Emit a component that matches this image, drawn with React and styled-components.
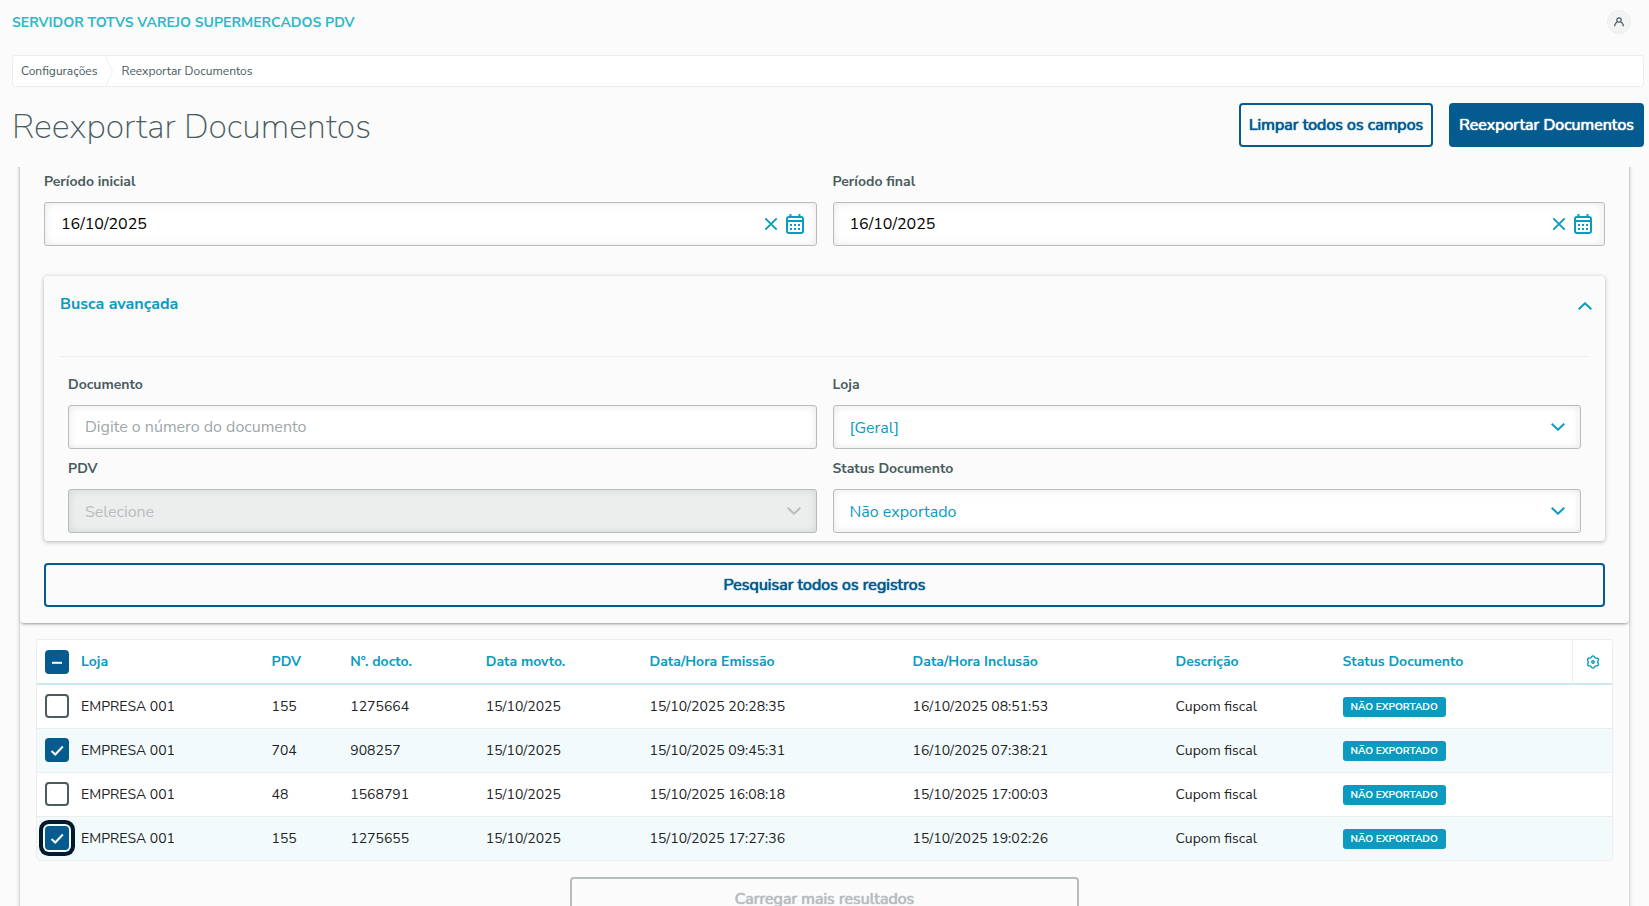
import React, { useEffect, useRef, useState } from 'react';
import styled, { createGlobalStyle } from 'styled-components';

const colors = {
    background: '#fbfbfb',
    brand: '#2cb9c9',
    primary: '#0c9abe',
    action: '#045b8f',
    text: '#1d2426',
    label: '#4a5c60',
    muted: '#9da7a9',
    disabled: '#b6bdbf',
    line: '#eceeee',
    selected: '#f2fafc',
    focus: '#041a2c',
};

const columns = [
    { key: 'loja', title: 'Loja', width: '12.1%' },
    { key: 'pdv', title: 'PDV', width: '5%' },
    { key: 'docto', title: 'Nº. docto.', width: '8.6%' },
    { key: 'movto', title: 'Data movto.', width: '10.4%' },
    { key: 'emissao', title: 'Data/Hora Emissão', width: '16.7%' },
    { key: 'inclusao', title: 'Data/Hora Inclusão', width: '16.7%' },
    { key: 'descricao', title: 'Descrição', width: '10.6%' },
];

const initialRows = [
    { loja: 'EMPRESA 001', pdv: '155', docto: '1275664', movto: '15/10/2025', emissao: '15/10/2025 20:28:35', inclusao: '16/10/2025 08:51:53', descricao: 'Cupom fiscal', checked: false },
    { loja: 'EMPRESA 001', pdv: '704', docto: '908257', movto: '15/10/2025', emissao: '15/10/2025 09:45:31', inclusao: '16/10/2025 07:38:21', descricao: 'Cupom fiscal', checked: true },
    { loja: 'EMPRESA 001', pdv: '48', docto: '1568791', movto: '15/10/2025', emissao: '15/10/2025 16:08:18', inclusao: '15/10/2025 17:00:03', descricao: 'Cupom fiscal', checked: false },
    { loja: 'EMPRESA 001', pdv: '155', docto: '1275655', movto: '15/10/2025', emissao: '15/10/2025 17:27:36', inclusao: '15/10/2025 19:02:26', descricao: 'Cupom fiscal', checked: true },
];

// outline of a gear with six rounded teeth, one pointing up
const gearPoints = Array.from({ length: 60 }, (_, i) => {
    const angle = (i / 60) * 2 * Math.PI;
    const radius = 5.4 + 0.7 * Math.cos(6 * angle);
    return `${(7 + radius * Math.sin(angle)).toFixed(2)},${(7 - radius * Math.cos(angle)).toFixed(2)}`;
}).join(' ');

const UserIcon = () => (
    <svg width="12" height="12" viewBox="0 0 12 12" fill="none" stroke={colors.label} strokeWidth="1.2">
        <circle cx="6" cy="4" r="2.2" />
        <path d="M1.6 10.2C1.8 8 3.2 6.4 4.6 5.8M10.4 10.2C10.2 8 8.8 6.4 7.4 5.8" />
    </svg>
);

const CloseIcon = () => (
    <svg width="14" height="14" viewBox="0 0 14 14" fill="none" stroke="currentColor" strokeWidth="1.9">
        <path d="M1.3 1.3L12.7 12.7M12.7 1.3L1.3 12.7" />
    </svg>
);

const CalendarIcon = () => (
    <svg width="18" height="20" viewBox="0 0 18 20" fill="none" stroke="currentColor">
        <rect x="1" y="3" width="16" height="16" rx="2" strokeWidth="2" />
        <path d="M1 7H17" strokeWidth="2" />
        <path d="M4.5 0V3M13.5 0V3" strokeWidth="2" />
        <path d="M4 11H14M4 15H14" strokeWidth="2" strokeDasharray="2 2" />
    </svg>
);

const Chevron = ({ up }) => (
    <svg width="14" height="8" viewBox="0 0 14 8" fill="none" stroke="currentColor" strokeWidth="2">
        <path d={up ? 'M0.7 7.3L7 1.3L13.3 7.3' : 'M0.7 0.7L7 6.7L13.3 0.7'} />
    </svg>
);

const GearIcon = () => (
    <svg width="14" height="14" viewBox="0 0 14 14" fill="none" stroke="currentColor" strokeWidth="1.4" strokeLinejoin="round">
        <polygon points={gearPoints} />
        <circle cx="7" cy="7" r="1.2" />
    </svg>
);

const Checkbox = ({ label, checked, indeterminate = false, onChange, autoFocus }) => {
    const ref = useRef(null);

    useEffect(() => {
        ref.current.indeterminate = indeterminate;
    }, [indeterminate]);

    return (
        <CheckWrapper>
            <CheckInput ref={ref} type="checkbox" aria-label={label} checked={checked} onChange={onChange} autoFocus={autoFocus} />
            <CheckMark viewBox="0 0 24 24" aria-hidden="true">
                {indeterminate && <path d="M7 12.8H17" />}
                {checked && !indeterminate && <path d="M6.5 13L10.3 16.5L17.8 8.5" />}
            </CheckMark>
        </CheckWrapper>
    );
};

const DateField = ({ id, label }) => {
    const [value, setValue] = useState('16/10/2025');

    return (
        <Field>
            <Label htmlFor={id}>{label}</Label>
            <Box>
                <Input id={id} type="text" value={value} onChange={(e) => setValue(e.target.value)} />
                <DateActions>
                    <IconButton type="button" aria-label="Limpar" onClick={() => setValue('')}><CloseIcon /></IconButton>
                    <IconButton type="button" aria-label="Calendário"><CalendarIcon /></IconButton>
                </DateActions>
            </Box>
        </Field>
    );
};

const SelectField = ({ id, label, option, disabled }) => (
    <Field>
        <Label htmlFor={id}>{label}</Label>
        <Box $disabled={disabled}>
            <Select id={id} disabled={disabled}>
                <option>{option}</option>
            </Select>
            <SelectArrow $disabled={disabled}><Chevron /></SelectArrow>
        </Box>
    </Field>
);

const App = () => {
    const [rows, setRows] = useState(initialRows);
    const all = rows.every((row) => row.checked);
    const some = rows.some((row) => row.checked);

    const toggle = (index) => {
        setRows(rows.map((row, i) => (i === index ? { ...row, checked: !row.checked } : row)));
    };

    const toggleAll = () => {
        setRows(rows.map((row) => ({ ...row, checked: !all })));
    };

    return (
        <Page>
            <GlobalStyle />
            <TopBar>
                <Brand>SERVIDOR TOTVS VAREJO SUPERMERCADOS PDV</Brand>
                <Avatar type="button" aria-label="Usuário"><UserIcon /></Avatar>
            </TopBar>

            <Heading>
                <Breadcrumb>
                    <Crumb href="#configuracoes">Configurações</Crumb>
                    <CrumbDivider viewBox="0 0 8 30" aria-hidden="true">
                        <path d="M0.5 0L7.5 16L0.5 30" />
                    </CrumbDivider>
                    <Crumb href="#reexportar">Reexportar Documentos</Crumb>
                </Breadcrumb>
                <TitleRow>
                    <Title>Reexportar Documentos</Title>
                    <Actions>
                        <Button type="button">Limpar todos os campos</Button>
                        <Button type="button" $primary>Reexportar Documentos</Button>
                    </Actions>
                </TitleRow>
            </Heading>

            <Content>
                <OuterCard>
                    <FilterCard>
                        <FieldGrid>
                            <DateField id="inicio" label="Período inicial" />
                            <DateField id="fim" label="Período final" />
                        </FieldGrid>
                        <Panel>
                            <PanelHeader>
                                <PanelTitle>Busca avançada</PanelTitle>
                                <IconButton type="button" aria-label="Recolher"><Chevron up /></IconButton>
                            </PanelHeader>
                            <Divider />
                            <PanelBody>
                                <Field>
                                    <Label htmlFor="documento">Documento</Label>
                                    <Box>
                                        <Input id="documento" type="text" placeholder="Digite o número do documento" />
                                    </Box>
                                </Field>
                                <SelectField id="loja" label="Loja" option="[Geral]" />
                                <SelectField id="pdv" label="PDV" option="Selecione" disabled />
                                <SelectField id="status" label="Status Documento" option="Não exportado" />
                            </PanelBody>
                        </Panel>
                        <Button type="button">Pesquisar todos os registros</Button>
                    </FilterCard>

                    <Results>
                        <TableFrame>
                            <Table>
                                <colgroup>
                                    <Col $width="36px" />
                                    {columns.map((column) => <Col key={column.key} $width={column.width} />)}
                                    <Col />
                                    <Col $width="40px" />
                                </colgroup>
                                <thead>
                                    <tr>
                                        <Th>
                                            <Checkbox label="Selecionar todos" checked={all} indeterminate={some && !all} onChange={toggleAll} />
                                        </Th>
                                        {columns.map((column) => <Th key={column.key}>{column.title}</Th>)}
                                        <Th>Status Documento</Th>
                                        <SettingsHead>
                                            <SettingsButton type="button" aria-label="Configurar colunas"><GearIcon /></SettingsButton>
                                        </SettingsHead>
                                    </tr>
                                </thead>
                                <tbody>
                                    {rows.map((row, index) => (
                                        <Row key={row.docto} $selected={row.checked}>
                                            <Td>
                                                <Checkbox
                                                    label={`Selecionar ${row.docto}`}
                                                    checked={row.checked}
                                                    onChange={() => toggle(index)}
                                                    autoFocus={index === 3}
                                                />
                                            </Td>
                                            {columns.map((column) => <Td key={column.key}>{row[column.key]}</Td>)}
                                            <Td><Tag>NÃO EXPORTADO</Tag></Td>
                                            <Td />
                                        </Row>
                                    ))}
                                </tbody>
                            </Table>
                        </TableFrame>
                        <LoadMore type="button" disabled>Carregar mais resultados</LoadMore>
                    </Results>
                </OuterCard>
            </Content>
        </Page>
    );
};

const GlobalStyle = createGlobalStyle`
    * {
        box-sizing: border-box;
    }

    body {
        margin: 0;
        background: ${colors.background};
        color: ${colors.text};
    }

    body, button, input, select {
        font-family: 'Nunito Sans', 'Open Sans', 'Noto Sans', sans-serif;
    }
`;

const Page = styled.div`
    display: flex;
    flex-direction: column;
    height: 100vh;
    overflow: hidden;
`;

const TopBar = styled.header`
    display: flex;
    align-items: center;
    justify-content: space-between;
    height: 44px;
    padding: 0 18px 0 12px;
    flex-shrink: 0;
`;

const Brand = styled.span`
    font-size: 14px;
    font-weight: 700;
    color: ${colors.brand};
`;

const Avatar = styled.button`
    display: flex;
    align-items: center;
    justify-content: center;
    width: 24px;
    height: 24px;
    padding: 0;
    border: 1px solid ${colors.line};
    border-radius: 50%;
    background: #f2f3f3;
`;

const Heading = styled.div`
    display: flex;
    flex-direction: column;
    gap: 16px;
    padding: 11px 5px 20px 12px;
    flex-shrink: 0;
`;

const Breadcrumb = styled.nav`
    display: flex;
    align-items: center;
    gap: 8px;
    height: 32px;
    padding: 0 8px;
    border: 1px solid ${colors.line};
    border-radius: 3px;
    background: #fff;
`;

const Crumb = styled.a`
    font-size: 12px;
    color: ${colors.label};
    text-decoration: none;
`;

const CrumbDivider = styled.svg`
    width: 8px;
    height: 30px;
    fill: none;
    stroke: ${colors.line};
`;

const TitleRow = styled.div`
    display: flex;
    align-items: center;
    justify-content: space-between;
`;

const Title = styled.h1`
    margin: 0;
    padding-top: 4px;
    font-size: 34px;
    line-height: 40px;
    font-weight: 200;
    color: ${colors.label};
`;

const Actions = styled.div`
    display: flex;
    gap: 16px;
`;

const Button = styled.button`
    height: 44px;
    padding: 0 8px;
    border: 2px solid ${colors.action};
    border-radius: 4px;
    background: ${(props) => (props.$primary ? colors.action : 'transparent')};
    color: ${(props) => (props.$primary ? '#fff' : colors.action)};
    font-size: 16px;
    font-weight: 400;
    text-shadow: 0 0 1px currentColor, 0 0 1px currentColor;
`;

const Content = styled.main`
    flex: 1;
    min-height: 0;
    padding: 0 20px;
    overflow: hidden;
`;

/* starts above the visible area so its top edge stays hidden */
const OuterCard = styled.div`
    min-height: 100%;
    margin-top: -12px;
    box-shadow: 0 1px 4px rgba(0, 0, 0, 0.3);
`;

const FilterCard = styled.section`
    display: flex;
    flex-direction: column;
    padding: 17px 24px 16px;
    border-radius: 0 0 4px 4px;
    box-shadow: 0 2px 3px -1px rgba(0, 0, 0, 0.4);
`;

const FieldGrid = styled.div`
    display: grid;
    grid-template-columns: 1fr 1fr;
    gap: 10px 16px;
`;

const Field = styled.div`
    display: flex;
    flex-direction: column;
    gap: 10px;
    min-width: 0;
`;

const Label = styled.label`
    font-size: 14px;
    line-height: 20px;
    font-weight: 700;
    color: ${colors.label};
`;

const Box = styled.div`
    position: relative;
    display: flex;
    align-items: center;
    height: 44px;
    border: 1px solid ${colors.disabled};
    border-radius: 3px;
    background: ${(props) => (props.$disabled ? '#eceeed' : '#fff')};
    box-shadow: inset 0 0 8px rgba(0, 0, 0, 0.1);
`;

const Input = styled.input`
    flex: 1;
    min-width: 0;
    height: 100%;
    padding: 0 16px;
    border: 0;
    background: transparent;
    color: #000;
    font-size: 16px;
    outline: none;

    &::placeholder {
        color: ${colors.muted};
    }
`;

const Select = styled.select`
    flex: 1;
    height: 100%;
    padding: 1px 48px 0 16px;
    border: 0;
    background: transparent;
    appearance: none;
    color: ${colors.primary};
    font-size: 16px;
    outline: none;

    &:disabled {
        color: ${colors.disabled};
        opacity: 1;
    }
`;

const SelectArrow = styled.span`
    position: absolute;
    right: 15px;
    display: flex;
    pointer-events: none;
    color: ${(props) => (props.$disabled ? colors.disabled : colors.primary)};
`;

const DateActions = styled.div`
    display: flex;
    align-items: center;
    gap: 8px;
    padding-right: 12px;
`;

const IconButton = styled.button`
    display: flex;
    padding: 0;
    border: 0;
    background: none;
    color: ${colors.primary};
`;

const Panel = styled.section`
    margin: 30px 0 22px;
    border-radius: 4px;
    box-shadow: 0 1px 4px rgba(0, 0, 0, 0.3);
`;

const PanelHeader = styled.div`
    display: flex;
    align-items: center;
    justify-content: space-between;
    height: 80px;
    padding: 0 13px 20px 16px;
`;

const PanelTitle = styled.h2`
    margin: 0;
    padding-bottom: 4px;
    font-size: 16px;
    line-height: 24px;
    font-weight: 700;
    color: ${colors.primary};
`;

const Divider = styled.hr`
    margin: 0 16px;
    border: 0;
    border-top: 1px solid ${colors.line};
`;

const PanelBody = styled(FieldGrid)`
    padding: 18px 24px 8px;
`;

const Results = styled.section`
    display: flex;
    flex-direction: column;
    align-items: center;
    gap: 16px;
    padding: 16px;
`;

const TableFrame = styled.div`
    width: 100%;
    border: 1px solid ${colors.line};
    border-radius: 3px;
    background: #fff;
`;

const Table = styled.table`
    width: 100%;
    table-layout: fixed;
    border-spacing: 0;
    font-size: 14px;
`;

const Col = styled.col`
    width: ${(props) => props.$width || 'auto'};
`;

const Th = styled.th`
    height: 45px;
    padding: 0 8px;
    border-bottom: 2px solid #cbe8f0;
    text-align: left;
    font-weight: 700;
    color: ${colors.primary};
`;

const SettingsHead = styled(Th)`
    padding: 0;
    border-left: 1px solid ${colors.line};
`;

const SettingsButton = styled(IconButton)`
    margin: 0 auto;
`;

const Td = styled.td`
    height: 44px;
    padding: 0 8px 1px;
    border-bottom: 1px solid ${colors.line};
    white-space: nowrap;
`;

const Row = styled.tr`
    background: ${(props) => (props.$selected ? colors.selected : '#fff')};

    &:last-child ${Td} {
        height: 43px;
        border-bottom: 0;
    }
`;

const Tag = styled.span`
    display: block;
    width: fit-content;
    margin-top: 2px;
    padding: 0 8px;
    border-radius: 3px;
    background: ${colors.primary};
    color: #fff;
    font-size: 10px;
    line-height: 20px;
    font-weight: 700;
`;

const CheckWrapper = styled.span`
    position: relative;
    display: block;
    width: 24px;
    height: 24px;
`;

const CheckInput = styled.input`
    display: block;
    width: 24px;
    height: 24px;
    margin: 0;
    border: 2px solid ${colors.label};
    border-radius: 4px;
    background: #fff;
    appearance: none;

    &:checked,
    &:indeterminate {
        border-color: ${colors.action};
        background: ${colors.action};
    }

    &:focus {
        outline: none;
        box-shadow: 0 0 0 2px ${colors.selected}, 0 0 0 6px ${colors.focus};
    }
`;

const CheckMark = styled.svg`
    position: absolute;
    inset: 0;
    fill: none;
    stroke: #fff;
    stroke-width: 2;
    pointer-events: none;
`;

const LoadMore = styled(Button)`
    width: calc(100% / 3 - 16px);
    border-color: ${colors.disabled};
    color: ${colors.disabled};
`;

export default App;
